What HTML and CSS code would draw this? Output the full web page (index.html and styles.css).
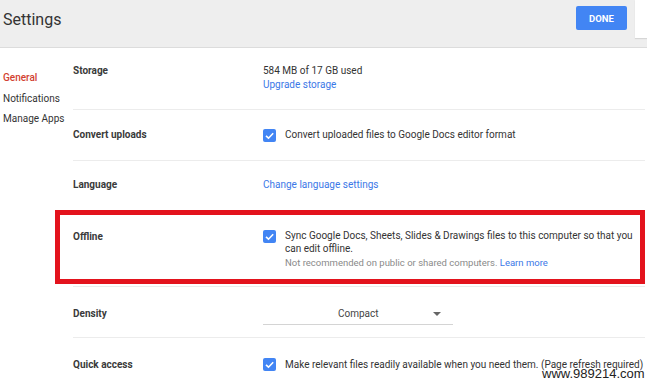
FILE: index.html
```html
<!DOCTYPE html>
<html>
<head>
<meta charset="utf-8" />
<meta name="viewport" content="width=device-width,initial-scale=1.0"/>
<link rel="stylesheet" href="styles.css">
</head>
<body>
<header class="topbar">
  <h1>Settings</h1>
  <button class="done">DONE</button>
  <div class="corner"></div>
</header>

<div class="page">
  <nav class="side">
    <div class="side_item active">General</div>
    <div class="side_item">Notifications</div>
    <div class="side_item">Manage Apps</div>
  </nav>

  <main class="rows">
    <div class="row storage">
      <div class="label">Storage</div>
      <div class="value">
        <div>584 MB of 17 GB used</div>
        <a class="link">Upgrade storage</a>
      </div>
    </div>

    <div class="row">
      <div class="label">Convert uploads</div>
      <div class="value check_line">
        <span class="box"><svg viewBox="0 0 13 13"><path d="M3 6.8 L5.5 9.2 L10.2 4.2" /></svg></span>
        <span>Convert uploaded files to Google Docs editor format</span>
      </div>
    </div>

    <div class="row no_line short">
      <div class="label">Language</div>
      <div class="value"><a class="link">Change language settings</a></div>
    </div>

    <div class="row offline">
      <div class="label">Offline</div>
      <div class="value check_line top">
        <span class="box"><svg viewBox="0 0 13 13"><path d="M3 6.8 L5.5 9.2 L10.2 4.2" /></svg></span>
        <div>
          <div>Sync Google Docs, Sheets, Slides &amp; Drawings files to this computer so that you can edit offline.</div>
          <div class="muted">Not recommended on public or shared computers. <a class="link">Learn more</a></div>
        </div>
      </div>
      <div class="marker"></div>
    </div>

    <div class="row lower">
      <div class="label">Density</div>
      <div class="value">
        <div class="select"><span>Compact</span><span class="arrow"></span></div>
      </div>
    </div>

    <div class="row no_line lower">
      <div class="label">Quick access</div>
      <div class="value check_line">
        <span class="box"><svg viewBox="0 0 13 13"><path d="M3 6.8 L5.5 9.2 L10.2 4.2" /></svg></span>
        <span>Make relevant files readily available when you need them. (Page refresh required)</span>
      </div>
    </div>
  </main>
</div>

<div class="stamp">www.989214.com</div>
</body>
</html>
```

FILE: styles.css
```css
body {
     margin:0;
     font-family:Roboto, "Noto Sans", sans-serif;
     color:#333333;
     background:#ffffff;
     overflow:hidden;
}

.topbar {
     display:flex;
     align-items:flex-start;
     height:48px;
     padding:6px 0 0 3px;
     box-sizing:border-box;
     background:#eeeeee;
     border-bottom:1px solid #dcdcdc;
}
.topbar h1 {
     flex:1;
     margin:2px 0 0 0;
     font-size:16px;
     font-weight:400;
     line-height:24px;
     color:#333333;
}
.done {
     width:51px;
     height:24px;
     border:none;
     border-radius:2px;
     background:#4285f4;
     color:#ffffff;
     font-family:Roboto, sans-serif;
     font-size:9.5px;
     font-weight:700;
     padding:0;
}
.corner {
     width:12px;
     height:38px;
     margin:-6px 0 0 8px;
     background:#ffffff;
     box-shadow:0 1px 1px #d6d6d6;
}

.page {
     display:flex;
}

.side {
     width:70px;
     padding:20px 0 0 3px;
     font-size:10px;
}
.side_item {
     line-height:20.5px;
     color:#333333;
}
.side_item.active {
     color:#d23f31;
     font-weight:500;
}

.rows {
     width:572px;
}

.row {
     display:flex;
     align-items:center;
     height:50px;
     border-bottom:1px solid #ececec;
     font-size:10px;
}
.row.no_line {
     border-bottom-color:transparent;
}
.row.short {
     height:48px;
}
.row.lower {
     padding-top:3px;
     height:47px;
}
.row.storage {
     align-items:flex-start;
     padding-top:16px;
     box-sizing:border-box;
     height:62px;
}
.label {
     width:190px;
     flex:none;
     font-weight:700;
     line-height:14px;
     color:#3a3a3a;
}
.value {
     line-height:14px;
}
.link {
     color:#3b78e7;
}

.check_line {
     display:flex;
     align-items:center;
     gap:9px;
}
.check_line.top {
     align-items:flex-start;
}
.box {
     width:13px;
     height:13px;
     flex:none;
     border-radius:2px;
     background:#4285f4;
}
.box svg {
     display:block;
     width:13px;
     height:13px;
     fill:none;
     stroke:#ffffff;
     stroke-width:1.6;
}

.offline {
     position:relative;
     align-items:flex-start;
     padding-top:20px;
     box-sizing:border-box;
     height:77px;
}
.offline .value {
     flex:none;
     width:386px;
     line-height:12.5px;
}
.muted {
     margin-top:2px;
     color:#8a8a8a;
     font-size:9.5px;
}
.marker {
     position:absolute;
     left:-18px;
     top:0;
     right:0;
     height:74px;
     box-sizing:border-box;
     border:5px solid #e3131d;
}

.select {
     display:flex;
     align-items:center;
     width:190px;
     height:20px;
     margin-top:2px;
     border-bottom:1px solid #d4d4d4;
     color:#444444;
}
.select span:first-child {
     margin-left:75px;
     flex:1;
}
.arrow {
     width:0;
     height:0;
     margin-right:12px;
     border-left:4px solid transparent;
     border-right:4px solid transparent;
     border-top:4px solid #666666;
}

.stamp {
     position:absolute;
     left:542px;
     top:367px;
     font-family:"Liberation Sans", Arial, sans-serif;
     font-size:13px;
     color:#222222;
     line-height:13px;
}
```
